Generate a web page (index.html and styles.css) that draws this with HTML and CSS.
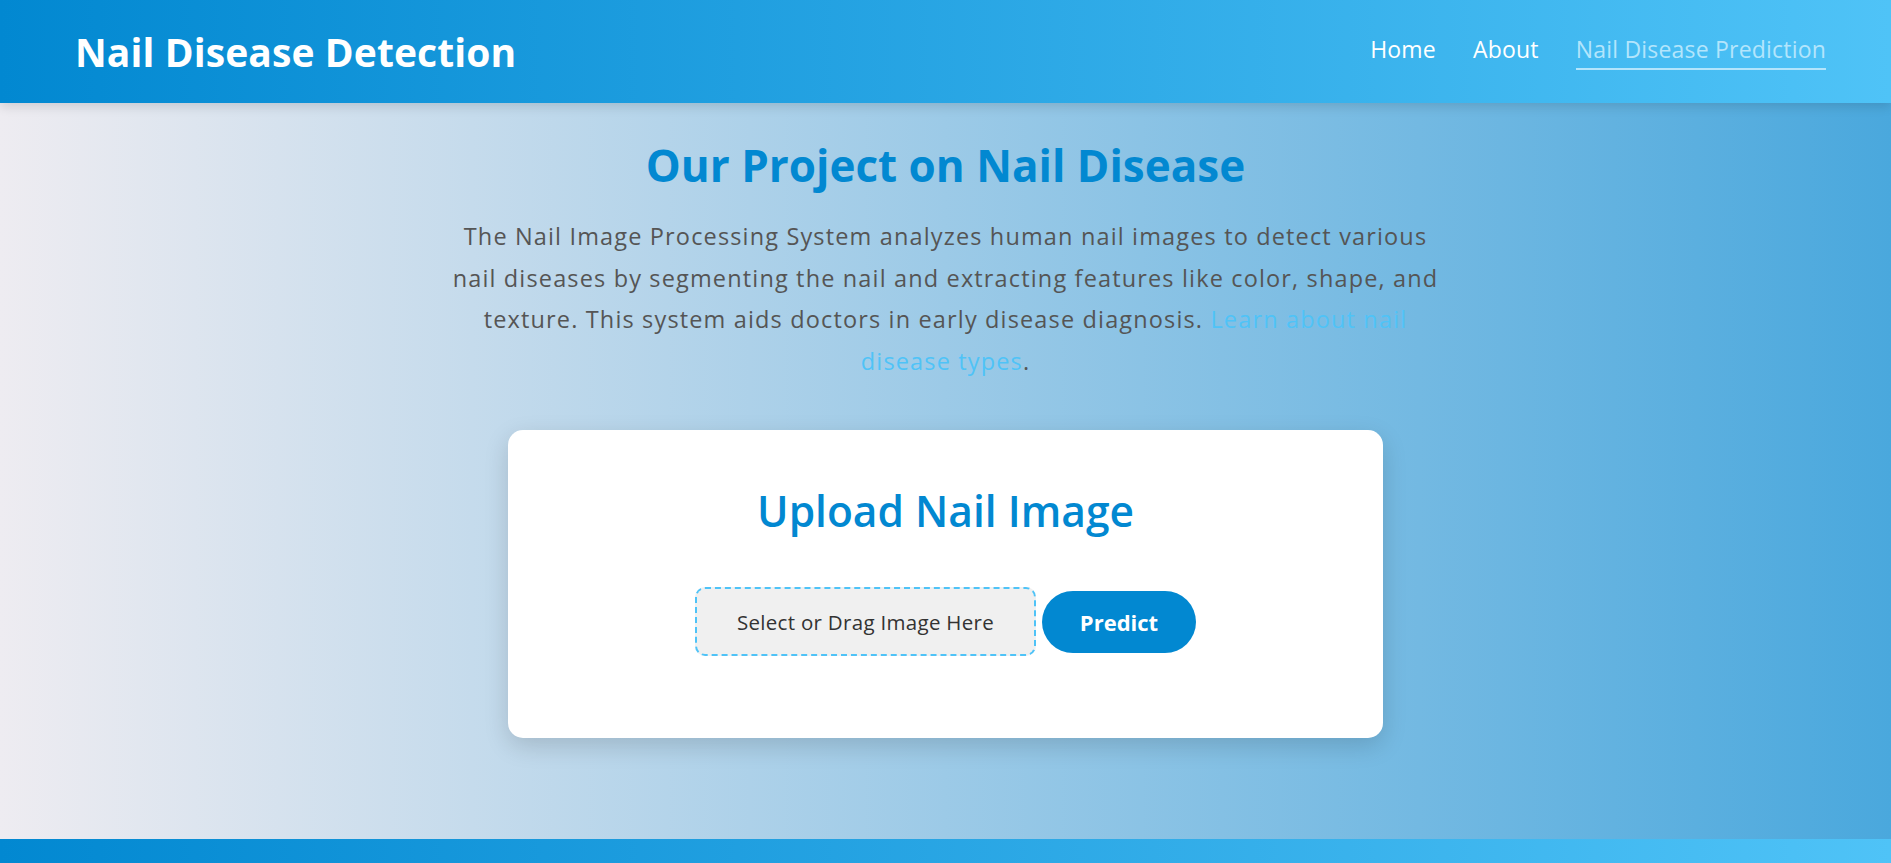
FILE: index.html
```html
<!DOCTYPE html>
<html lang="en">
<head>
<meta charset="UTF-8">
<title>Nail Disease Detection</title>
<link rel="stylesheet" href="styles.css">
</head>
<body>
<header class="site-header">
  <div class="brand">Nail Disease Detection</div>
  <nav class="nav">
    <a href="#" class="nav-link">Home</a>
    <a href="#" class="nav-link">About</a>
    <a href="#" class="nav-link active">Nail Disease Prediction</a>
  </nav>
</header>
<main class="main">
  <h1 class="title">Our Project on Nail Disease</h1>
  <p class="intro">The Nail Image Processing System analyzes human nail images to detect various nail diseases by segmenting the nail and extracting features like color, shape, and texture. This system aids doctors in early disease diagnosis. <a href="#" class="intro-link">Learn about nail disease types</a>.</p>
  <section class="card">
    <h2 class="card-title">Upload Nail Image</h2>
    <form class="upload-form">
      <label class="drop-zone">Select or Drag Image Here</label>
      <button type="button" class="predict-btn">Predict</button>
    </form>
  </section>
</main>
<footer class="site-footer"></footer>
</body>
</html>
```
FILE: styles.css
```css
* { box-sizing: border-box; }
html, body { height: 100%; }
body {
  margin: 0;
  font-family: "Open Sans", "Noto Sans", sans-serif;
  background: linear-gradient(to right, #eeecf1, #4aa8dd);
  display: flex;
  flex-direction: column;
  min-height: 100vh;
  overflow: hidden;
}
.site-header {
  height: 103px;
  flex: none;
  background: linear-gradient(to right, #0288d1, #4fc3f7);
  display: flex;
  align-items: center;
  justify-content: space-between;
  padding: 0 65px 0 75px;
  box-shadow: 0 4px 10px rgba(0,0,0,0.12);
  position: relative;
  z-index: 1;
}
.brand {
  color: #fff;
  font-weight: 700;
  font-size: 39px;
  letter-spacing: 0.1px;
}
.nav { display: flex; gap: 37px; align-items: center; }
.nav-link {
  color: #fff;
  text-decoration: none;
  font-size: 23px;
  letter-spacing: 0.2px;
  padding-bottom: 3px;
  border-bottom: 2px solid transparent;
}
.nav-link.active {
  color: #b3e5fc;
  border-bottom-color: #b3e5fc;
}
.main {
  flex: 1;
  display: flex;
  flex-direction: column;
  align-items: center;
  padding-top: 34px;
}
.title {
  margin: 0;
  font-size: 44px;
  font-weight: 700;
  color: #0288d1;
  line-height: 1.3;
}
.intro {
  margin: 22px 0 0;
  max-width: 990px;
  text-align: center;
  font-size: 23.5px;
  letter-spacing: 1.15px;
  line-height: 41.5px;
  color: #555;
}
.intro-link { color: #4fc3f7; text-decoration: none; }
.card {
  margin-top: 48px;
  width: 875px;
  height: 308px;
  background: #fff;
  border-radius: 15px;
  box-shadow: 0 8px 24px rgba(0,0,0,0.15);
  display: flex;
  flex-direction: column;
  align-items: center;
  padding-top: 53px;
}
.card-title {
  margin: 0;
  font-size: 42.5px;
  font-weight: 600;
  color: #0288d1;
  line-height: 1.3;
}
.upload-form {
  margin-top: 49px;
  display: flex;
  align-items: center;
  gap: 6px;
}
.drop-zone {
  width: 341px;
  height: 69px;
  display: flex;
  align-items: center;
  justify-content: center;
  background: #f0f0f0;
  border: 2px dashed #4fc3f7;
  border-radius: 10px;
  font-size: 20.5px;
  letter-spacing: 0.3px;
  color: #333;
}
.predict-btn {
  width: 154px;
  height: 62px;
  border: none;
  border-radius: 31px;
  background: #0288d1;
  color: #fff;
  font-family: inherit;
  font-weight: 700;
  font-size: 22px;
}
.site-footer {
  flex: none;
  height: 24px;
  background: linear-gradient(to right, #0288d1, #4fc3f7);
}
```
